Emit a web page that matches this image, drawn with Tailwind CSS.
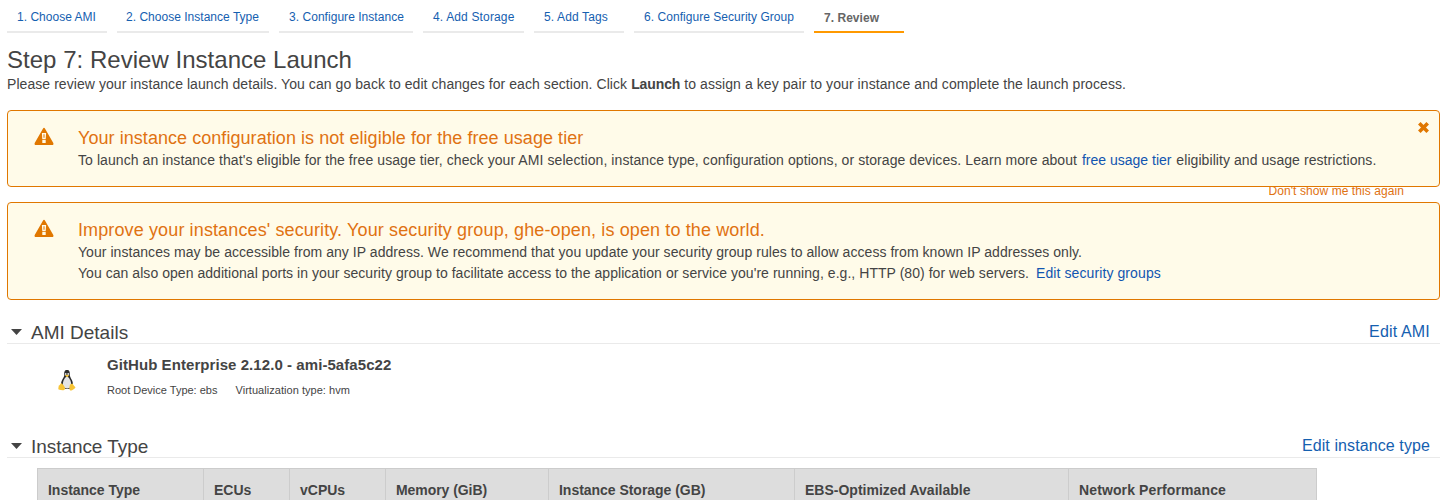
<!DOCTYPE html>
<html lang="en">
<head>
<meta charset="utf-8">
<title>Step 7: Review Instance Launch</title>
<script src="https://cdn.jsdelivr.net/npm/@tailwindcss/browser@4"></script>
</head>
<body class="h-[500px] overflow-hidden bg-white pl-[7px] pr-[5px] font-['Liberation_Sans',Arial,sans-serif] text-sm text-[#444] whitespace-nowrap">
<nav class="flex h-[33px] gap-[10px] text-xs leading-[34px] text-[#1560b0]">
  <a class="w-[100px] border-b-2 border-[#eaeaea] pl-[10px] tracking-[0.02px]">1. Choose AMI</a>
  <a class="w-[152px] border-b-2 border-[#eaeaea] pl-[9px] tracking-[0.02px]">2. Choose Instance Type</a>
  <a class="w-[134px] border-b-2 border-[#eaeaea] pl-[10px] tracking-[0.04px]">3. Configure Instance</a>
  <a class="w-[101px] border-b-2 border-[#eaeaea] pl-[10px] tracking-[0.15px]">4. Add Storage</a>
  <a class="w-[90px] border-b-2 border-[#eaeaea] pl-[10px] tracking-[0.136px]">5. Add Tags</a>
  <a class="w-[170px] border-b-2 border-[#eaeaea] pl-[10px] tracking-[0.046px]">6. Configure Security Group</a>
  <a class="w-[90px] border-b-2 border-[#f90] pl-[10px] pt-px font-bold text-[#666] tracking-[0.033px]">7. Review</a>
</nav>
<main>
  <h1 class="mt-[11px] text-2xl leading-[32px] tracking-[0.026px]">Step 7: Review Instance Launch</h1>
  <p class="-mt-[2px] leading-5 tracking-[0.062px]">Please review your instance launch details. You can go back to edit changes for each section. Click <b class="tracking-[-0.1px]">Launch</b> <span class="tracking-[0.074px]">to assign a key pair to your instance and complete the launch process.</span></p>

  <section class="relative mt-4 flex h-[77px] rounded border border-[#e07700] bg-[#fffbe9]">
    <svg class="ml-[26px] mt-4 h-[19px] w-5 shrink-0" viewBox="0 0 20 19"><path fill="#e07700" fill-rule="evenodd" d="M8.9 1.700Q10 0 11.100 1.700L19.300 16Q20 18.100 18 18.100H2Q0 18.100.7 16ZM7.900 6 8.300 12.200H11.700L12.100 6ZM8.300 13V16H11.700V13Z"/><path fill="#e07700" d="M9.500 7.200h1v3.600h-1z"/></svg>
    <div class="ml-[24px] pt-[16px]">
      <h2 class="text-lg leading-[22px] text-[#df7212] tracking-[0.055px]">Your instance configuration is not eligible for the free usage tier</h2>
      <p class="mt-px leading-[21px]"><span class="tracking-[0.078px]">To launch an instance that's eligible for the free usage tier, check your AMI selection, instance type, configuration options, or storage devices. Learn more about</span> <a class="mx-[1px] text-[#1155b0]">free usage tier</a> <span class="tracking-[0.067px]">eligibility and usage restrictions.</span></p>
    </div>
    <svg class="absolute right-[10px] top-[11px] h-[11px] w-[11px]" viewBox="0 0 11 11"><path fill="none" stroke="#e07700" stroke-width="3.6" d="M1.300 1.300 9.700 9.700M9.700 1.300 1.300 9.700"/></svg>
    <div class="absolute right-[35px] top-[76px] h-4 overflow-hidden text-xs leading-4 tracking-[0.075px] text-[#df7212]"><p class="-mt-[4px]">Don't show me this again</p></div>
  </section>

  <section class="mt-[15px] flex h-[98px] rounded border border-[#e07700] bg-[#fffbe9]">
    <svg class="ml-[26px] mt-4 h-[19px] w-5 shrink-0" viewBox="0 0 20 19"><path fill="#e07700" fill-rule="evenodd" d="M8.900 1.700Q10 0 11.100 1.700L19.300 16Q20 18.100 18 18.100H2Q0 18.100.7 16ZM7.900 6 8.300 12.200H11.700L12.100 6ZM8.300 13V16H11.700V13Z"/><path fill="#e07700" d="M9.500 7.200h1v3.600h-1z"/></svg>
    <div class="ml-[24px] pt-[16px]">
      <h2 class="text-lg leading-[22px] text-[#df7212] tracking-[0.122px]">Improve your instances' security. Your security group, ghe-open, is open to the world.</h2>
      <p class="mt-px leading-[21px] tracking-[0.052px]">Your instances may be accessible from any IP address. We recommend that you update your security group rules to allow access from known IP addresses only.</p>
      <p class="leading-[21px]"><span class="tracking-[0.048px]">You can also open additional ports in your security group to facilitate access to the application or service you're running, e.g., HTTP (80) for web servers.</span> <a class="ml-[3px] tracking-[0.1px] text-[#1155b0]">Edit security groups</a></p>
    </div>
  </section>

  <section class="mt-4 h-[114px]">
    <header class="flex h-[28px] items-end border-b border-[#eaeaea] pr-[10px]">
      <svg class="mb-[8px] ml-[4px] h-[6px] w-[11px]" viewBox="0 0 11 6"><path fill="#444" d="M0 0H11L5.500 6Z"/></svg>
      <h3 class="-mb-px ml-[9px] text-[19px] leading-[22px]">AMI Details</h3>
      <a class="ml-auto pb-[1px] text-base leading-5 tracking-[0.17px] text-[#1560b0]">Edit AMI</a>
    </header>
    <div class="flex">
      <svg class="ml-[51px] mt-[26px] h-[21px] w-[18px] shrink-0" viewBox="0 0 18 21">
        <path fill="#2b2b2b" d="M9 0C6.500 0 6 2 6.300 5 6.200 7.500 3 10 3 14.500 3 17 5 19 9 19S15 17 15 14.500C15 10 12 8 11.800 5 12 2 11.500 0 9 0Z"/>
        <path fill="#e4e4e4" d="M9 6.500C7 7 4.800 11 4.800 14.500 5 17.500 7 18.500 9 18.500S13.200 17.500 13.200 14.500C13.200 11 11 7 9 6.500Z"/>
        <path fill="#ddd" d="M7.100 3h1.300v2H7.100ZM9.500 3h1.400v2H9.500Z"/>
        <path fill="#f7c436" d="M6.800 5.300Q9 4 11.200 5.300L9.200 7.300ZM3.500 13.300C5 14 6.800 17 7.200 18.500 6.700 21 3.500 20.300.6 19.400-.2 18.300 1 17 .6 15.800 2 15.500 2.300 13.300 3.500 13.300ZM14.700 13.600C15.500 15.500 16 16 17.400 17.200 17.500 18.200 14.500 20.600 12.500 20.600 10.700 19.800 11.500 16 12 14.400Z"/>
      </svg>
      <div class="ml-[31px] pt-[11px]">
        <h4 class="text-[15px] font-bold leading-5 tracking-[0.066px]">GitHub Enterprise 2.12.0 - ami-5afa5c22</h4>
        <p class="mt-[7px] flex gap-[18px] text-[11px] leading-4"><span>Root Device Type: ebs</span><span class="tracking-[0.04px]">Virtualization type: hvm</span></p>
      </div>
    </div>
  </section>

  <section>
    <header class="flex h-[28px] items-end border-b border-[#eaeaea] pr-[10px]">
      <svg class="mb-[8px] ml-[4px] h-[6px] w-[11px]" viewBox="0 0 11 6"><path fill="#444" d="M0 0H11L5.500 6Z"/></svg>
      <h3 class="-mb-px ml-[9px] text-[19px] leading-[22px] tracking-[-0.06px]">Instance Type</h3>
      <a class="ml-auto pb-[1px] text-base leading-5 tracking-[0.1px] text-[#1560b0]">Edit instance type</a>
    </header>
    <div class="ml-[30px] mt-[10px] grid h-[43px] w-[1280px] grid-cols-[166px_86px_96px_163px_246px_274px_249px] border-t border-[#ccc] bg-[#ddd] font-bold leading-[42px]">
      <div class="border-l border-[#ccc] pl-[10px] tracking-[-0.03px]">Instance Type</div>
      <div class="border-l border-[#ccc] pl-[10px]">ECUs</div>
      <div class="border-l border-[#ccc] pl-[10px]">vCPUs</div>
      <div class="border-l border-[#ccc] pl-[10px] tracking-[-0.06px]">Memory (GiB)</div>
      <div class="border-l border-[#ccc] pl-[10px] tracking-[-0.03px]">Instance Storage (GB)</div>
      <div class="border-l border-[#ccc] pl-[10px]">EBS-Optimized Available</div>
      <div class="border-x border-[#ccc] pl-[10px] tracking-[0.12px]">Network Performance</div>
    </div>
  </section>
</main>
</body>
</html>
